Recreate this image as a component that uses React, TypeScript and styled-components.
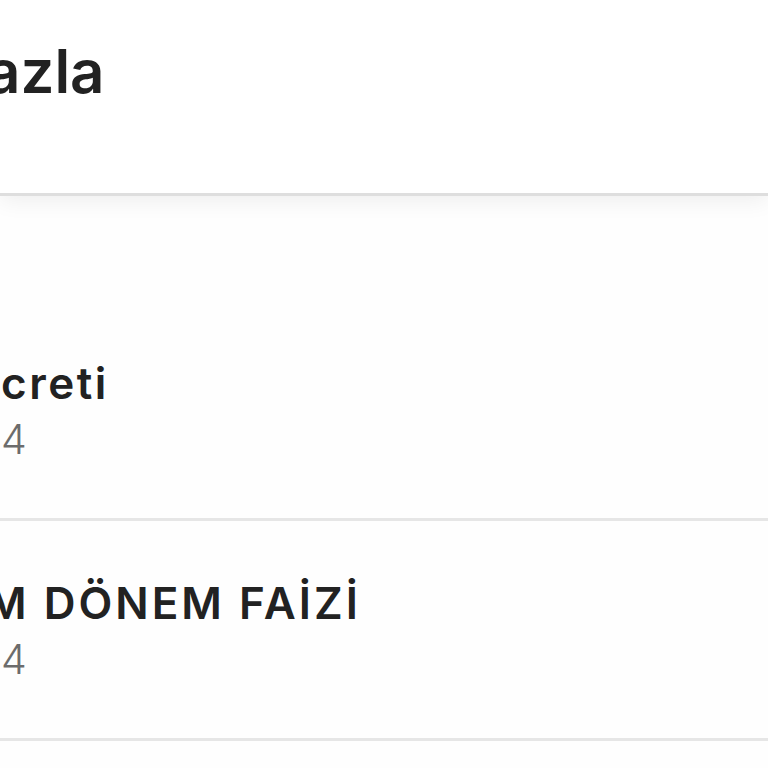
import styled, { createGlobalStyle } from "styled-components";

const GlobalStyle = createGlobalStyle`
  html, body {
    margin: 0;
    padding: 0;
    background: #fefefe;
    overflow: hidden;
  }
  body {
    font-family: Inter, "Noto Sans", "Liberation Sans", sans-serif;
    -webkit-font-smoothing: antialiased;
  }
`;

const Screen = styled.div`
  width: 768px;
  height: 768px;
  overflow: hidden;
  display: flex;
  flex-direction: column;
  background: #fefefe;
`;

const Header = styled.header`
  position: relative;
  z-index: 1;
  box-sizing: border-box;
  height: 196px;
  padding-top: 41px;
  background: #ffffff;
  border-bottom: 3px solid #dedede;
  box-shadow: 0 4px 22px rgba(0, 0, 0, 0.07);
  flex-shrink: 0;
`;

const Title = styled.h1<{ $shift: number }>`
  margin: 0 0 0 ${(p) => p.$shift}px;
  font-size: 60px;
  line-height: 60px;
  font-weight: 600;
  color: #222222;
  white-space: nowrap;
`;

const List = styled.ul`
  list-style: none;
  margin: 0;
  padding: 105px 0 0;
  display: flex;
  flex-direction: column;
`;

const Row = styled.li`
  display: flex;
  flex-direction: column;
  gap: 6px;
  padding: 56px 0 55px;
  border-bottom: 3px solid #e6e6e6;
  flex-shrink: 0;
`;

const RowTitle = styled.span<{ $shift: number; $caps?: boolean }>`
  margin-left: ${(p) => p.$shift}px;
  font-size: 44px;
  line-height: 52px;
  font-weight: 600;
  color: #222222;
  white-space: nowrap;
  letter-spacing: ${(p) => (p.$caps ? "3px" : "2.5px")};
`;

const RowValue = styled.span<{ $shift: number }>`
  margin-left: ${(p) => p.$shift}px;
  font-size: 41px;
  line-height: 48px;
  font-weight: 300;
  color: #6c6c6c;
  white-space: nowrap;
`;

type Fee = {
  title: string;
  titleShift: number;
  caps?: boolean;
  value: string;
  valueShift: number;
};

const fees: Fee[] = [
  { title: "creti", titleShift: 1, value: "4", valueShift: 1 },
  {
    title: "M DÖNEM FAİZİ",
    titleShift: -14,
    caps: true,
    value: "4",
    valueShift: 1,
  },
  { title: "", titleShift: 0, value: "", valueShift: 0 },
];

export default function App() {
  return (
    <>
      <GlobalStyle />
      <Screen>
        <Header>
          <Title $shift={-14}>azla</Title>
        </Header>
        <List>
          {fees.map((fee, i) => (
            <Row key={i}>
              <RowTitle $shift={fee.titleShift} $caps={fee.caps}>
                {fee.title || "\u00a0"}
              </RowTitle>
              <RowValue $shift={fee.valueShift}>
                {fee.value || "\u00a0"}
              </RowValue>
            </Row>
          ))}
        </List>
      </Screen>
    </>
  );
}
